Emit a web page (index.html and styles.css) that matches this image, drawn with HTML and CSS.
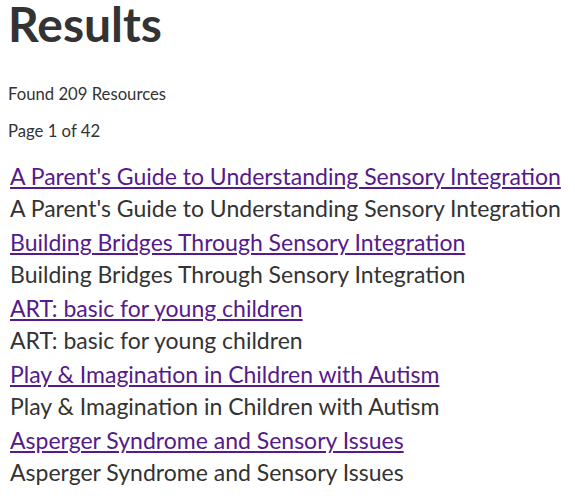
FILE: index.html
```html
<!DOCTYPE html>
<html>
<head>
<meta charset="utf-8">
<link rel="stylesheet" href="styles.css">
</head>
<body>
<h1 class="title">Results</h1>
<p class="meta meta-found">Found 209 Resources</p>
<p class="meta meta-page">Page 1 of 42</p>
<ul class="results">
  <li class="item"><a class="item-link" href="#">A Parent's Guide to Understanding Sensory Integration</a><div class="item-desc">A Parent's Guide to Understanding Sensory Integration</div></li>
  <li class="item"><a class="item-link" href="#">Building Bridges Through Sensory Integration</a><div class="item-desc">Building Bridges Through Sensory Integration</div></li>
  <li class="item"><a class="item-link" href="#">ART: basic for young children</a><div class="item-desc">ART: basic for young children</div></li>
  <li class="item"><a class="item-link" href="#">Play &amp; Imagination in Children with Autism</a><div class="item-desc">Play &amp; Imagination in Children with Autism</div></li>
  <li class="item"><a class="item-link" href="#">Asperger Syndrome and Sensory Issues</a><div class="item-desc">Asperger Syndrome and Sensory Issues</div></li>
</ul>
</body>
</html>
```
FILE: styles.css
```css
body {
  margin: 0 8px;
  font-family: Lato, "Open Sans", sans-serif;
  color: #333333;
  background: #ffffff;
}
.title {
  font-size: 48px;
  font-weight: 700;
  line-height: 48px;
  margin: 0;
}
.meta {
  font-size: 16.7px;
  line-height: 20px;
  margin: 0;
}
.meta-found {
  margin-top: 36px;
}
.meta-page {
  margin-top: 17px;
}
.results {
  list-style: none;
  margin: 19px 0 0 0;
  padding: 0 0 0 2px;
}
.item {
  margin-bottom: 2px;
}
.item-link {
  display: block;
  color: #551a8b;
  font-size: 23px;
  line-height: 32px;
}
.item-desc {
  font-size: 23px;
  line-height: 32px;
}
```
